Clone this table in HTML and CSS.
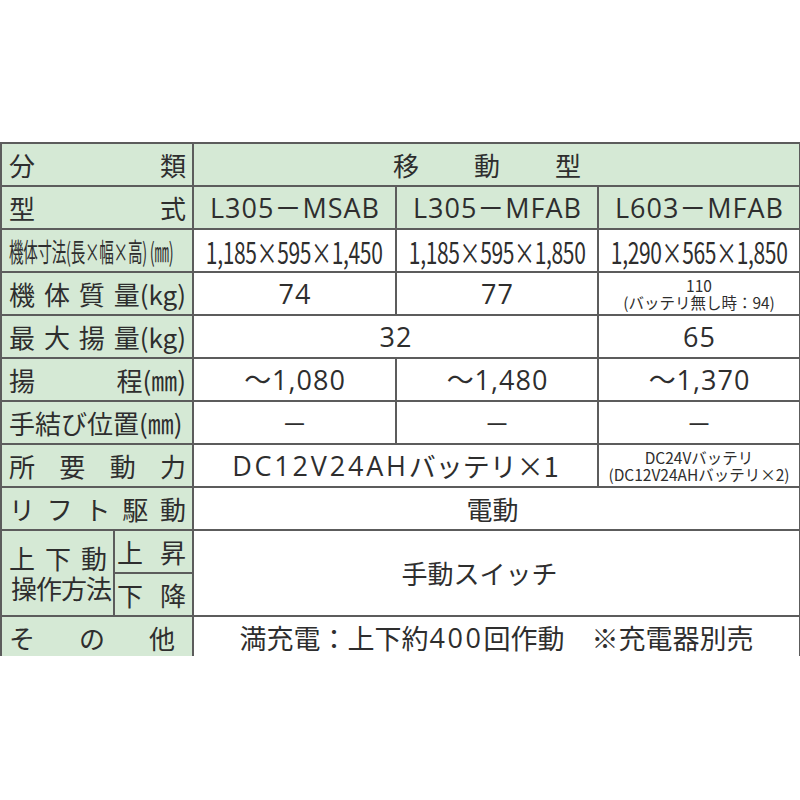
FILE: index.html
```html
<!DOCTYPE html>
<html lang="ja">
<head>
<meta charset="utf-8">
<title>仕様表</title>
<link rel="stylesheet" href="styles.css">
</head>
<body>
<div class="frame">
<table class="spec">
<colgroup><col class="c-a"><col class="c-b"><col class="c-m1"><col class="c-m"><col class="c-m"></colgroup>
<tr>
  <th colspan="2"><div class="lbl"><span>分</span><span>類</span></div></th>
  <td colspan="3" class="hd"><div class="cell type">移動型</div></td>
</tr>
<tr>
  <th colspan="2"><div class="lbl"><span>型</span><span>式</span></div></th>
  <td class="hd"><div class="cell latin">L305－MSAB</div></td>
  <td class="hd"><div class="cell latin">L305－MFAB</div></td>
  <td class="hd"><div class="cell latin">L603－MFAB</div></td>
</tr>
<tr>
  <th colspan="2"><div class="lbl"><span class="narrow">機体寸法(長×幅×高) (㎜)</span></div></th>
  <td><div class="cell"><span class="dims">1,185×595×1,450</span></div></td>
  <td><div class="cell"><span class="dims">1,185×595×1,850</span></div></td>
  <td><div class="cell"><span class="dims">1,290×565×1,850</span></div></td>
</tr>
<tr>
  <th colspan="2"><div class="lbl"><span>機</span><span>体</span><span>質</span><span>量(kg)</span></div></th>
  <td><div class="cell latin">74</div></td>
  <td><div class="cell latin">77</div></td>
  <td><div class="cell small"><span>110</span><span>(バッテリ無し時：94)</span></div></td>
</tr>
<tr>
  <th colspan="2"><div class="lbl"><span>最</span><span>大</span><span>揚</span><span>量(kg)</span></div></th>
  <td colspan="2"><div class="cell latin">32</div></td>
  <td><div class="cell latin">65</div></td>
</tr>
<tr>
  <th colspan="2"><div class="lbl"><span>揚</span><span>程(㎜)</span></div></th>
  <td><div class="cell latin">～1,080</div></td>
  <td><div class="cell latin">～1,480</div></td>
  <td><div class="cell latin">～1,370</div></td>
</tr>
<tr>
  <th colspan="2"><div class="lbl"><span>手結び位置(㎜)</span></div></th>
  <td><div class="cell">－</div></td>
  <td><div class="cell">－</div></td>
  <td><div class="cell">－</div></td>
</tr>
<tr>
  <th colspan="2"><div class="lbl"><span>所</span><span>要</span><span>動</span><span>力</span></div></th>
  <td colspan="2"><div class="cell power"><span class="os">DC12V24AH</span>バッテリ×1</div></td>
  <td><div class="cell small"><span>DC24Vバッテリ</span><span>(DC12V24AHバッテリ×2)</span></div></td>
</tr>
<tr>
  <th colspan="2"><div class="lbl"><span>リ</span><span>フ</span><span>ト</span><span>駆</span><span>動</span></div></th>
  <td colspan="3"><div class="cell electric">電動</div></td>
</tr>
<tr>
  <th rowspan="2" class="op"><div class="op-lbl"><div class="lbl op-top"><span>上</span><span>下</span><span>動</span></div><div class="op-bot">操作方法</div></div></th>
  <th class="sub"><div class="lbl"><span>上</span><span>昇</span></div></th>
  <td colspan="3" rowspan="2"><div class="cell shift-l">手動スイッチ</div></td>
</tr>
<tr>
  <th class="sub"><div class="lbl"><span>下</span><span>降</span></div></th>
</tr>
<tr class="last">
  <th colspan="2"><div class="lbl other"><span>そ</span><span>の</span><span>他</span></div></th>
  <td colspan="3"><div class="cell note">満充電：上下約<span class="os">400</span>回作動　※充電器別売</div></td>
</tr>
</table>
</div>
</body>
</html>
```
FILE: styles.css
```css
html, body {
  margin: 0;
  padding: 0;
  background: #ffffff;
}

body {
  font-family: "Noto Sans CJK JP", "Noto Sans", sans-serif;
  color: #2e2e2e;
}

.frame {
  margin-top: 142px;
  height: 514px;
  overflow: hidden;
}

.spec {
  border-collapse: collapse;
  table-layout: fixed;
  width: 800px;
}

.c-a { width: 113px; }
.c-b { width: 79px; }
.c-m1 { width: 203px; }
.c-m { width: 202px; }

.spec th,
.spec td {
  border: 2px solid #5c5c5c;
  padding: 0;
  height: 41px;
  font-weight: 400;
  vertical-align: middle;
  white-space: nowrap;
  overflow: visible;
}

.spec th {
  background: #d5e9d5;
}

.spec td.hd {
  background: #d5e9d5;
}

.spec tr.last th,
.spec tr.last td {
  height: 60px;
  vertical-align: top;
}

.spec tr.last .lbl,
.spec tr.last .cell {
  height: 41px;
}

.lbl {
  display: flex;
  justify-content: space-between;
  align-items: center;
  padding: 0 6px 0 7px;
  font-size: 26px;
  line-height: 30px;
}

.lbl.other {
  padding-right: 17px;
}

.narrow {
  display: inline-block;
  transform: scaleX(0.56);
  transform-origin: left center;
  letter-spacing: -0.5px;
}

.cell {
  display: flex;
  justify-content: center;
  align-items: center;
  font-size: 26px;
  line-height: 30px;
}

.cell.latin {
  font-family: "Open Sans", "Noto Sans CJK JP", sans-serif;
  font-size: 27px;
  letter-spacing: 1px;
  padding-left: 1px;
}

.os {
  font-family: "Open Sans", "Noto Sans CJK JP", sans-serif;
}

.type {
  letter-spacing: 55px;
  padding-left: 36px;
}

.dims {
  display: inline-block;
  font-size: 30px;
  transform: scaleX(0.7);
  transform-origin: center center;
  letter-spacing: -0.5px;
}

.cell.small {
  flex-direction: column;
  font-size: 15.5px;
  line-height: 17px;
}

.cell.power {
  font-size: 27px;
}

.cell.power .os {
  letter-spacing: 2.8px;
}

.cell.electric {
  padding-right: 8px;
}

.cell.note {
  font-size: 27px;
}

.cell.note .os {
  letter-spacing: 2.5px;
  padding-left: 1px;
}

.shift-l {
  padding-right: 34px;
}

.op-lbl {
  display: flex;
  flex-direction: column;
  justify-content: center;
  height: 84px;
}

.op .lbl {
  padding: 0 6px 0 7px;
}

.op-top {
  line-height: 30px;
}

.op-bot {
  padding-left: 7px;
  font-size: 26px;
  line-height: 30px;
  letter-spacing: -1px;
}

.sub .lbl {
  padding: 0 6px 0 2px;
}
```
